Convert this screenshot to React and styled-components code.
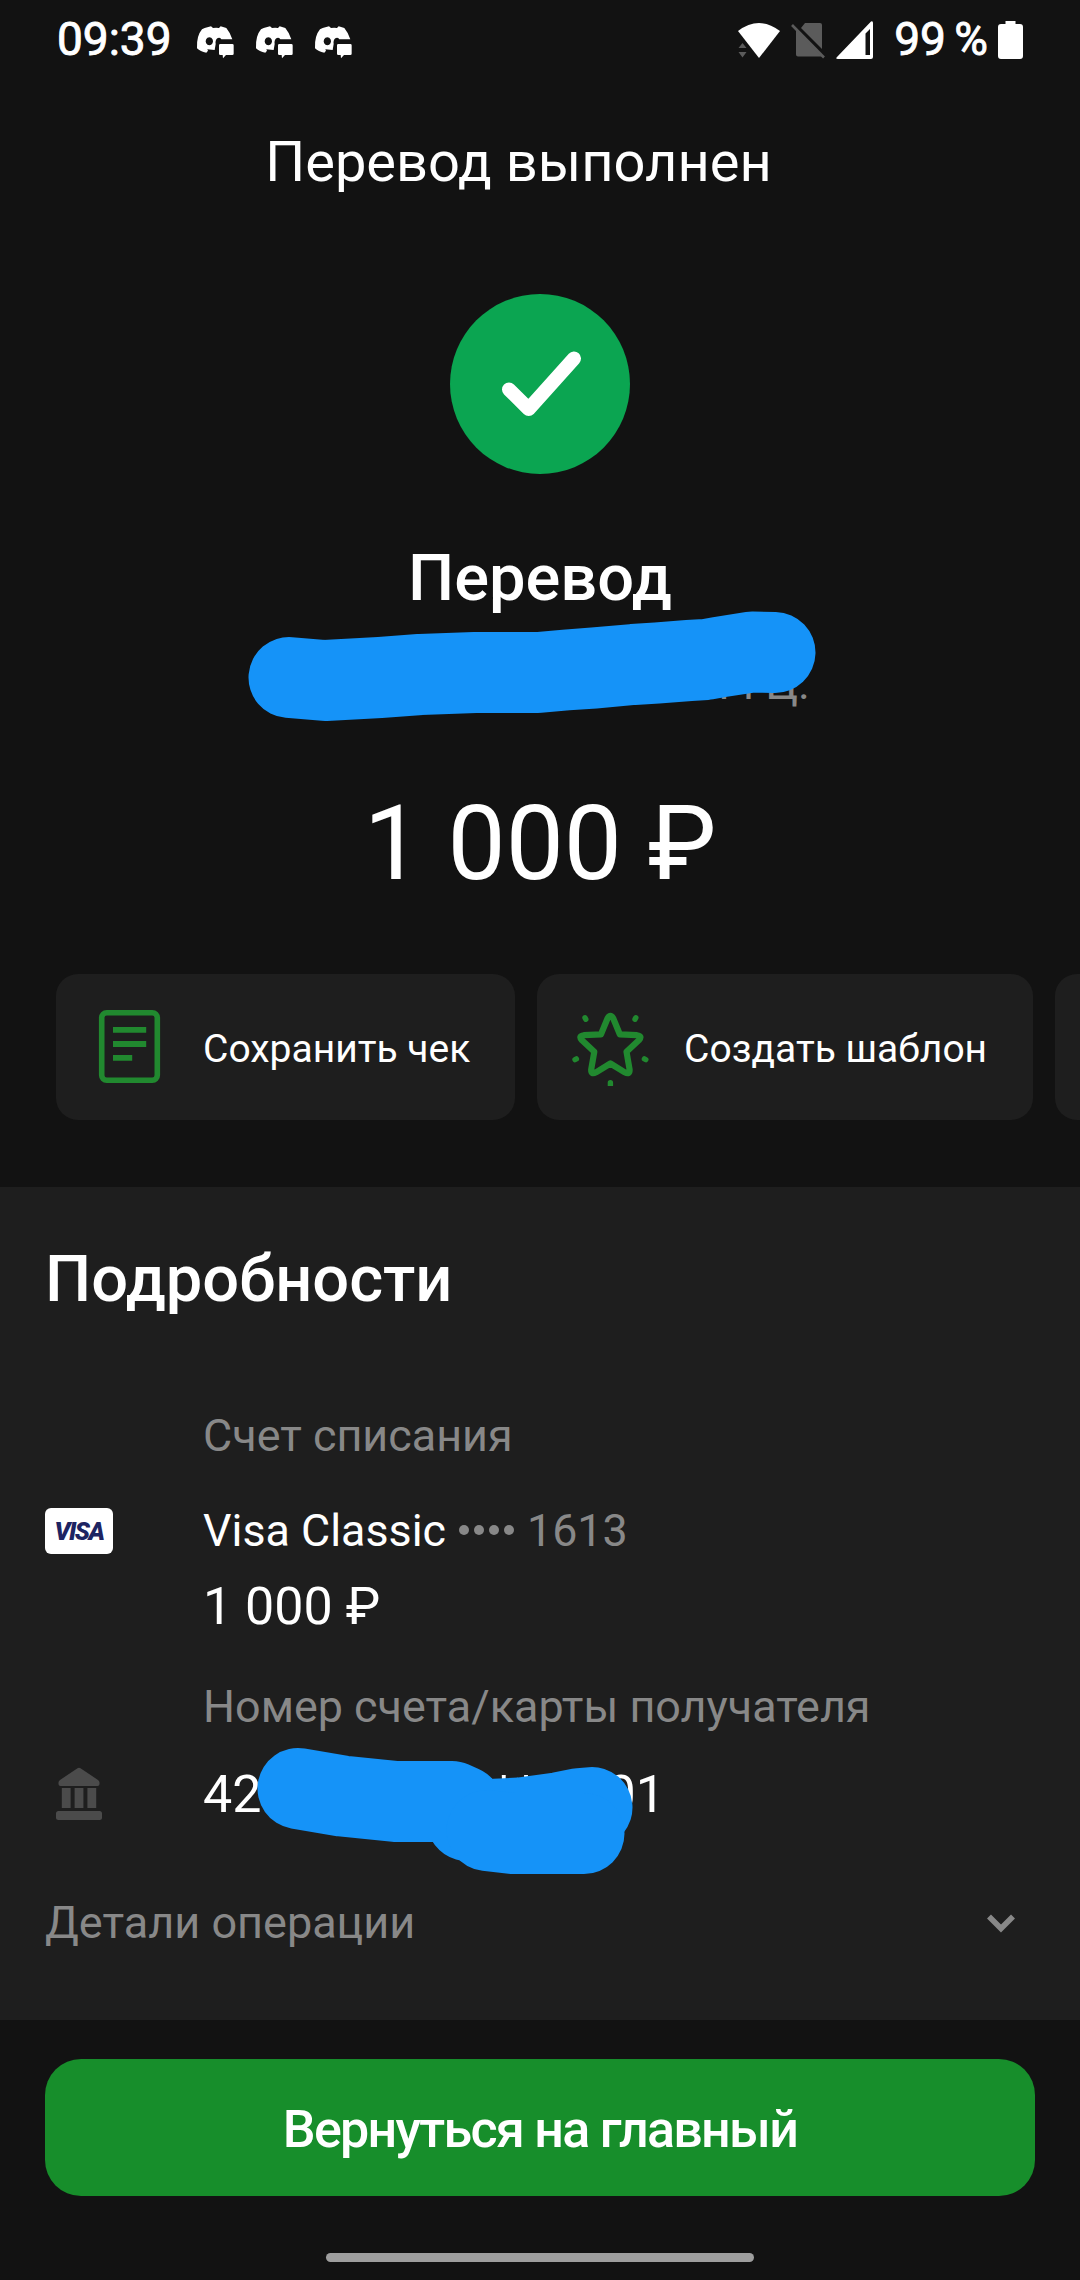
import React from "react";
import styled, { createGlobalStyle } from "styled-components";

const actions = [
  { id: "receipt", label: "Сохранить чек", icon: ReceiptIcon, width: 459 },
  { id: "template", label: "Создать шаблон", icon: StarIcon, width: 496 },
];

function DiscordIcon() {
  return (
    <svg width="38" height="33" viewBox="499 78 114 99">
      <path
        fill="#fff"
        fillRule="evenodd"
        d="M525 84L544 79L550 84Q560 82 568 84L573 79L590 84Q603 100 608 118H575Q570 111 563 115Q556 121 558 132L555 150L533 148L535 152L530 158Q512 155 502 145Q500 108 517 88ZM539 112a11 12 0 1 0 .1 0Z"
      />
      <path
        fill="#fff"
        d="M572 132H608Q612 132 612 136V161Q612 165 608 165H589L580 175L579 165H572Q568 165 568 161V136Q568 132 572 132Z"
      />
    </svg>
  );
}

function WifiIcon() {
  return (
    <svg width="43" height="36" viewBox="737 22 43 36">
      <path fill="#fff" d="M737 31Q758 15 779 31L758 58Z" />
      <path fill="#5b5b5b" d="M737.500 48L741.500 43L745.500 48ZM737.500 52H745.500L741.500 57.500Z" />
    </svg>
  );
}

function NoSimIcon() {
  return (
    <svg width="35" height="37" viewBox="788 23 35 37">
      <path fill="#5b5b5b" d="M802 24H817Q819 24 819 26V50L798 29ZM793 31L819 57.500H795Q793 57.500 793 55.500Z" />
      <path stroke="#5b5b5b" strokeWidth="2.6" d="M789 26L821 58.500" />
    </svg>
  );
}

function SignalIcon() {
  return (
    <svg width="38" height="39" viewBox="836 21 38 39">
      <path
        fill="#fff"
        fillRule="evenodd"
        d="M871 21.500Q873 20.500 873 23V57Q873 59 871 59H838Q835 59 837 57ZM870 29L865.500 33.500V55H870Z"
      />
    </svg>
  );
}

function BatteryIcon() {
  return (
    <svg width="25" height="38" viewBox="0 0 25 38">
      <path fill="#fff" d="M7.500 0H17.500V3H22Q25 3 25 6V35Q25 38 22 38H3Q0 38 0 35V6Q0 3 3 3H7.500Z" />
    </svg>
  );
}

function ReceiptIcon() {
  return (
    <svg width="78" height="78" viewBox="90 1008 78 78" fill="none" stroke="#21892f">
      <rect x="101.700" y="1012.700" width="55.600" height="67.600" rx="5" strokeWidth="5.600" />
      <path strokeWidth="5.800" d="M113 1029.800H146.200M113 1044H146.200M113 1057.800H132.200" />
    </svg>
  );
}

function StarIcon() {
  return (
    <svg width="78" height="78" viewBox="571 1008 78 78" fill="none" stroke="#21892f" strokeLinecap="round">
      <path
        strokeWidth="6.200"
        strokeLinejoin="round"
        d="M607.700 1018Q610.400 1013.500 613.100 1018L619.800 1034.300L637 1035.200Q642.800 1036 638.800 1040.300L626.500 1051.800L629.600 1069.500Q629.800 1075 624.800 1072.300L610.400 1063.500L596 1072.300Q591 1075 591.200 1069.500L594.300 1051.800L582 1040.300Q578 1036 583.800 1035.200L601 1034.300Z"
      />
      <path
        strokeWidth="5.400"
        d="M585 1017.700L585.800 1019.300M635.800 1017.700L635 1019.300M575 1059.600L576.400 1058.900M645.800 1059.600L644.400 1058.900M610.400 1082.800V1085.200"
      />
    </svg>
  );
}

function BankIcon() {
  return (
    <svg width="68" height="56" viewBox="45 1766 68 56" fill="#4b4b4b">
      <path d="M77.500 1767.300Q79 1766 80.500 1767.300L98 1779Q99.500 1780 99.500 1781.500V1783Q99.500 1785 97.500 1785H60.500Q58.500 1785 58.500 1783V1781.500Q58.500 1780 60 1779Z" />
      <path d="M61.800 1787H70.600V1807H61.800ZM74.600 1787H83.400V1807H74.600ZM87.400 1787H96.200V1807H87.400Z" />
      <rect x="56" y="1810" width="46" height="9" rx="2.500" />
    </svg>
  );
}

function App() {
  return (
    <Screen>
      <GlobalStyle />
      <StatusBar>
        <StatusText>09:39</StatusText>
        <Notifications>
          <DiscordIcon />
          <DiscordIcon />
          <DiscordIcon />
        </Notifications>
        <SystemIcons>
          <WifiIcon />
          <NoSimIcon />
          <SignalIcon />
        </SystemIcons>
        <StatusText>99 %</StatusText>
        <Battery>
          <BatteryIcon />
        </Battery>
      </StatusBar>

      <Header>Перевод выполнен</Header>

      <Summary>
        <SuccessBadge>
          <svg width="180" height="180" viewBox="450 294 180 180">
            <path
              d="M509 389.500L528.700 409L574 358.500"
              fill="none"
              stroke="#fff"
              strokeWidth="14"
              strokeLinecap="round"
              strokeLinejoin="round"
            />
          </svg>
        </SuccessBadge>
        <Operation>Перевод</Operation>
        <Recipient>
          ич Ц.
          <Scribble $top={-57} width="1080" height="140" viewBox="0 600 1080 140">
            <path d="M289 677.500L325 680.500L380 677.500L420 674.500L475 672.500H538L566 670L594 668L633 664.500L657 663L689 660.500L706 659.500L720 657L752 652L775 652.500" />
          </Scribble>
        </Recipient>
        <Amount>1 000 ₽</Amount>
      </Summary>

      <Actions>
        {actions.map(({ id, label, icon: Icon, width }) => (
          <ActionCard key={id} $width={width}>
            <Icon />
            <ActionLabel>{label}</ActionLabel>
          </ActionCard>
        ))}
        <ActionCard $width={400} />
      </Actions>

      <Details>
        <DetailsTitle>Подробности</DetailsTitle>
        <Label>Счет списания</Label>
        <Row>
          <VisaCard>
            <span>VISA</span>
          </VisaCard>
          <CardName>
            Visa Classic
            <Dots>
              <i />
              <i />
              <i />
              <i />
            </Dots>
            <Muted>1613</Muted>
          </CardName>
        </Row>
        <Charge>1 000 ₽</Charge>
        <Label>Номер счета/карты получателя</Label>
        <AccountRow>
          <BankIcon />
          <AccountNumber>
            <span>42</span>
            <Masked>**</Masked>
            <span>01</span>
          </AccountNumber>
          <Scribble $top={-34} width="1080" height="160" viewBox="0 1730 1080 160">
            <path d="M298 1788.500L342 1796L396 1801.500H452L462 1806L467 1820.500L520 1818L560 1812.500L580 1808.500L592 1807.500" />
            <path d="M487 1830.500L513 1833.500H584" />
          </Scribble>
        </AccountRow>
        <Expander>
          Детали операции
          <svg width="30" height="21" viewBox="986 1913 30 21">
            <path d="M989 1916.500L1001 1928.500L1013 1916.500" fill="none" stroke="#888" strokeWidth="5.600" />
          </svg>
        </Expander>
      </Details>

      <Footer>
        <HomeButton>Вернуться на главный</HomeButton>
        <GestureBar />
      </Footer>
    </Screen>
  );
}

const GlobalStyle = createGlobalStyle`
  * {
    box-sizing: border-box;
  }

  body {
    margin: 0;
    background: #121212;
    font-family: Roboto, "Liberation Sans", sans-serif;
    color: #fff;
  }

  svg {
    display: block;
    flex-shrink: 0;
  }
`;

const Screen = styled.div`
  width: 1080px;
  height: 2280px;
  display: flex;
  flex-direction: column;
  overflow: hidden;
  background: #121212;
`;

const StatusBar = styled.div`
  height: 80px;
  display: flex;
  align-items: center;
  padding: 0 57px 0 57px;
`;

const StatusText = styled.span`
  font-size: 46px;
  line-height: 79px;
  height: 80px;
  font-weight: 400;
  word-spacing: -3px;
  -webkit-text-stroke: 0.9px #fff;
  white-space: nowrap;
`;

const Notifications = styled.div`
  display: flex;
  gap: 21px;
  margin-left: 24px;
  padding-top: 4px;
`;

const SystemIcons = styled.div`
  display: flex;
  align-items: center;
  gap: 10px;
  margin-left: auto;
  margin-right: 20px;
`;

const Battery = styled.div`
  margin-left: 10px;
`;

const Header = styled.h1`
  margin: 0;
  height: 164px;
  padding-right: 43px;
  font-size: 56px;
  line-height: 164px;
  font-weight: 400;
  text-align: center;
`;

const Summary = styled.section`
  display: flex;
  flex-direction: column;
  align-items: center;
  padding-top: 50px;
`;

const SuccessBadge = styled.div`
  width: 180px;
  height: 180px;
  border-radius: 50%;
  background: #0ba551;
`;

const Operation = styled.h2`
  margin: 65px 0 0;
  font-size: 65px;
  line-height: 78px;
  font-weight: 500;
`;

const Recipient = styled.div`
  position: relative;
  width: 100%;
  margin-top: 40px;
  padding-right: 270px;
  font-size: 45px;
  line-height: 54px;
  text-align: right;
  color: #888;
`;

const Scribble = styled.svg`
  position: absolute;
  left: 0;
  top: ${({ $top }) => $top}px;
  fill: none;
  stroke: #1593f8;
  stroke-width: 81px;
  stroke-linecap: round;
  stroke-linejoin: round;
`;

const Amount = styled.div`
  margin-top: 71px;
  font-size: 103.5px;
  line-height: 124px;
  white-space: nowrap;
`;

const Actions = styled.div`
  display: flex;
  gap: 22px;
  margin-top: 68px;
  padding-left: 56px;
`;

const ActionCard = styled.div`
  display: flex;
  align-items: center;
  flex-shrink: 0;
  gap: 35px;
  width: ${({ $width }) => $width}px;
  height: 146px;
  padding: 0 0 0 34px;
  border-radius: 22px;
  background: #1e1e1e;
  font-size: 39px;
  white-space: nowrap;
`;

const ActionLabel = styled.span`
  padding-top: 3px;
`;

const Details = styled.section`
  height: 833px;
  margin-top: 67px;
  padding: 53px 0 0;
  background: #1e1e1e;
`;

const DetailsTitle = styled.h2`
  margin: 0 0 91px 45px;
  font-size: 65px;
  line-height: 78px;
  font-weight: 500;
`;

const Label = styled.div`
  padding-left: 203px;
  font-size: 44.9px;
  line-height: 54px;
  color: #888;
`;

const Row = styled.div`
  display: flex;
  align-items: center;
  gap: 90px;
  margin-top: 41px;
  padding-left: 45px;
`;

const VisaCard = styled.div`
  width: 68px;
  height: 46px;
  display: flex;
  align-items: center;
  justify-content: center;
  border-radius: 6px;
  background: #fff;
  color: #1d2462;
  font-size: 25px;
  font-style: italic;
  font-weight: 900;
  letter-spacing: -1.5px;
`;

const CardName = styled.div`
  display: flex;
  align-items: center;
  font-size: 44.8px;
  line-height: 54px;
`;

const Dots = styled.span`
  display: flex;
  gap: 5px;
  margin: 0 13px 2px;

  i {
    width: 10px;
    height: 10px;
    border-radius: 50%;
    background: #888;
  }
`;

const Muted = styled.span`
  color: #888;
`;

const Charge = styled.div`
  margin: 18px 0 42px;
  padding-left: 203px;
  font-size: 52px;
  line-height: 62px;
`;

const AccountRow = styled(Row)`
  position: relative;
  margin-top: 30px;
`;

const AccountNumber = styled.div`
  display: flex;
  justify-content: space-between;
  width: 462px;
  font-size: 52px;
  line-height: 62px;
`;

const Masked = styled.span`
  margin: 0 auto 0 231px;
`;

const Expander = styled.div`
  display: flex;
  align-items: center;
  justify-content: space-between;
  margin-top: 70px;
  padding: 0 64px 0 45px;
  font-size: 45px;
  line-height: 54px;
  color: #888;
`;

const Footer = styled.footer`
  display: flex;
  flex-direction: column;
  align-items: center;
  padding-top: 39px;
`;

const HomeButton = styled.button`
  width: 990px;
  height: 137px;
  padding: 3px 0 0;
  border: none;
  border-radius: 36px;
  background: #178e2b;
  color: #fff;
  font-family: inherit;
  font-size: 52px;
  font-weight: 500;
  letter-spacing: -1.7px;
`;

const GestureBar = styled.div`
  width: 428px;
  height: 9px;
  margin-top: 57px;
  border-radius: 5px;
  background: #9e9e9e;
`;

export default App;
